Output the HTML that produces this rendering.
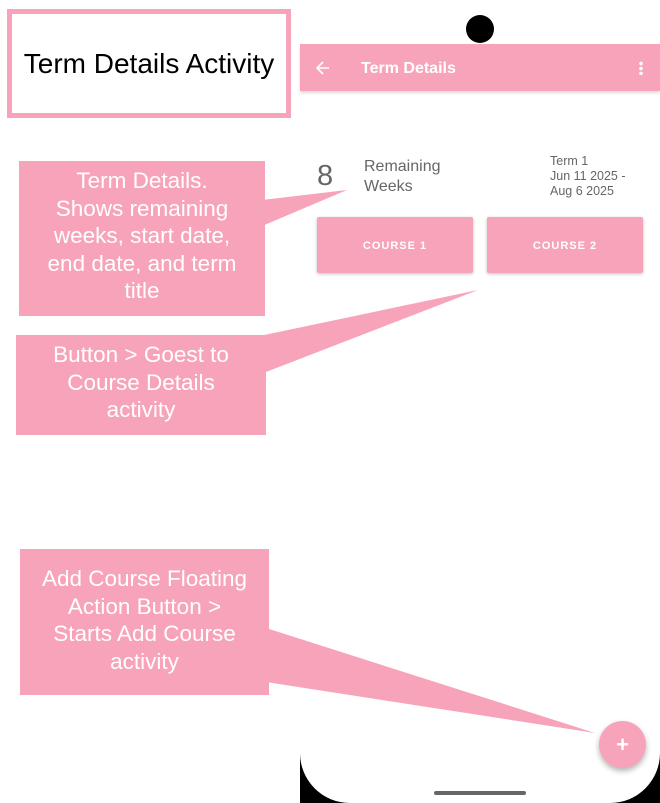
<!DOCTYPE html>
<html><head><style>
body{margin:0;width:660px;height:803px;background:#fff;position:relative;overflow:hidden;font-family:"Liberation Sans",sans-serif}
.a{position:absolute}
.cb{position:absolute;background:#f7a4ba;color:#fff;text-align:center;font-size:22.5px;line-height:27.5px;box-sizing:border-box;white-space:nowrap}
.btn{position:absolute;background:#f7a4ba;color:#fff;font-size:11px;font-weight:bold;letter-spacing:1px;text-align:center;line-height:58px;border-radius:2px;box-shadow:0 1px 3px rgba(0,0,0,.25)}
</style></head><body>
<div class="a" style="left:7px;top:9px;width:274px;height:99px;border:5px solid #f7a4ba;font-size:28px;line-height:99px;text-align:center;white-space:nowrap">Term Details Activity</div>
<div class="a" style="left:300px;top:700px;width:360px;height:103px;background:#000"></div>
<div class="a" style="left:300px;top:0;width:360px;height:803px;background:#fff;border-radius:50px"></div>
<div class="a" style="left:300px;top:0;width:360px;height:60px;background:#fff"></div>
<div class="a" style="left:466px;top:15px;width:28px;height:28px;border-radius:50%;background:#000"></div>
<div class="a" style="left:300px;top:44px;width:360px;height:47px;background:#f7a4ba;box-shadow:0 2px 3px rgba(0,0,0,.15)"></div>
<svg class="a" style="left:314px;top:59px" width="18" height="18"><path d="M15 9H3M9 3L3 9l6 6" stroke="#fff" stroke-width="1.6" fill="none"/></svg>
<div class="a" style="left:361px;top:60px;color:#fff;font-weight:bold;font-size:16px">Term Details</div>
<div class="a" style="left:639px;top:61px;width:4px;height:14px;background:radial-gradient(circle,#fff 1.6px,transparent 2px) 0 0/4px 5px"></div>
<div class="a" style="left:317px;top:160px;font-size:29px;color:#666">8</div>
<div class="a" style="left:364px;top:157px;font-size:16px;line-height:20px;color:#666">Remaining<br>Weeks</div>
<div class="a" style="left:550px;top:154px;font-size:12.5px;line-height:15px;color:#666">Term 1<br>Jun 11 2025 -<br>Aug 6 2025</div>
<div class="btn" style="left:317px;top:217px;width:156px;height:56px">COURSE 1</div>
<div class="btn" style="left:487px;top:217px;width:156px;height:56px">COURSE 2</div>
<div class="a" style="left:599px;top:721px;width:47px;height:47px;border-radius:50%;background:#f7a4ba;box-shadow:0 3px 6px rgba(0,0,0,.3);color:#fff;font-size:22px;font-weight:bold;text-align:center;line-height:47px">+</div>
<div class="a" style="left:434px;top:791px;width:92px;height:4px;border-radius:2px;background:#666"></div>
<svg class="a" style="left:0;top:0" width="660" height="803"><g fill="#f7a4ba">
<polygon points="262,200 262,226 347,190"/>
<polygon points="250,338 266,372 478,290"/>
<polygon points="266,628 266,682 595,733"/>
</g></svg>
<div class="cb" style="left:19px;top:161px;width:246px;height:155px;padding-top:6px">Term Details.<br>Shows remaining<br>weeks, start date,<br>end date, and term<br>title</div>
<div class="cb" style="left:16px;top:335px;width:250px;height:100px;padding-top:6px">Button &gt; Goest to<br>Course Details<br>activity</div>
<div class="cb" style="left:20px;top:549px;width:249px;height:146px;padding-top:16px">Add Course Floating<br>Action Button &gt;<br>Starts Add Course<br>activity</div>
</body></html>
